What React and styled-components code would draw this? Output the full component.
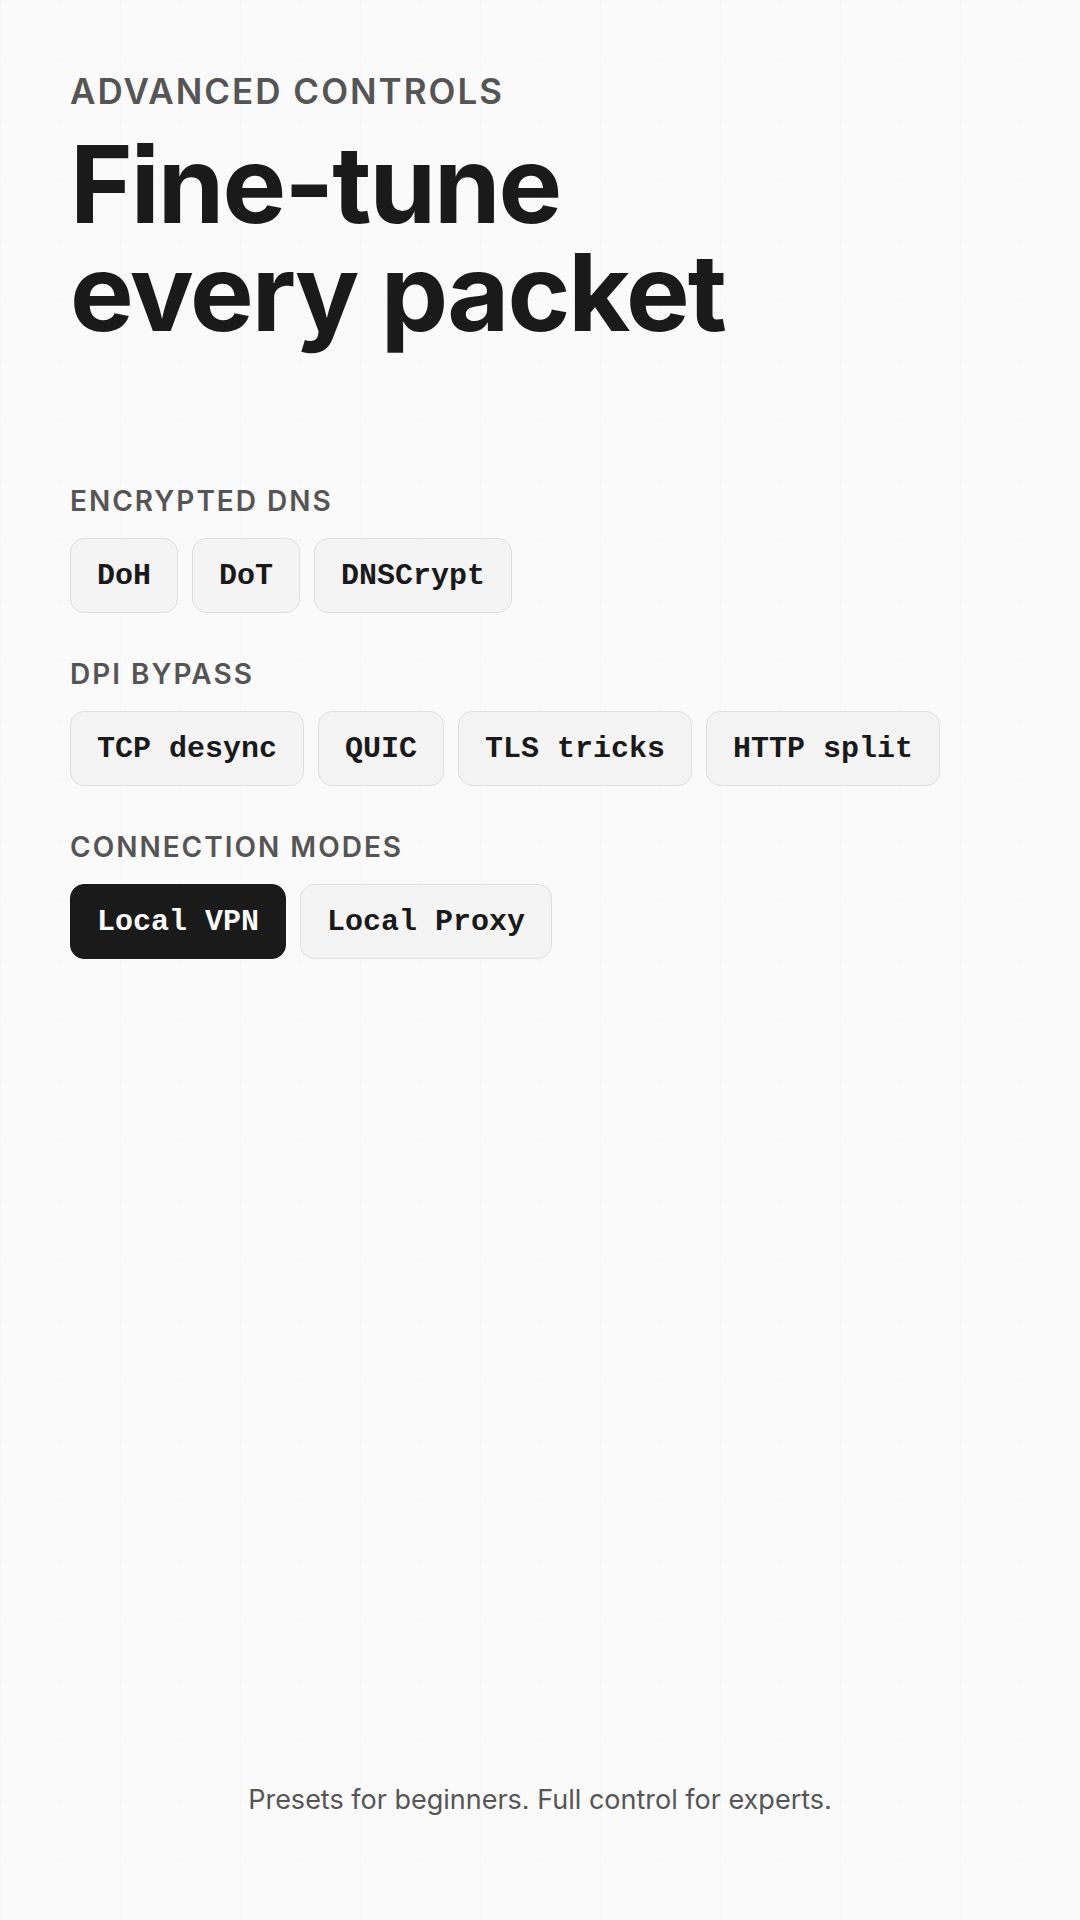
import React from "react";
import styled, { createGlobalStyle } from "styled-components";

const GlobalStyle = createGlobalStyle`
  * {
    box-sizing: border-box;
  }

  body {
    margin: 0;
    background: #fafafa;
    color: #1a1a1a;
    font-family: Inter, "Liberation Sans", sans-serif;
    font-feature-settings: "ss07";
  }
`;

// faint 60px grid behind everything
const Page = styled.main`
  display: flex;
  flex-direction: column;
  min-height: 100vh;
  padding: 70px 70px 96px;
  background-color: #fafafa;
  background-image: linear-gradient(rgba(0, 0, 0, 0.01) 1px, transparent 1px),
    linear-gradient(90deg, rgba(0, 0, 0, 0.01) 1px, transparent 1px);
  background-size: 60px 60px;
`;

const Eyebrow = styled.p`
  margin: 0;
  color: #555;
  font-size: 35px;
  font-weight: 600;
  line-height: 42px;
  letter-spacing: 2px;
  text-transform: uppercase;
`;

const Title = styled.h1`
  margin: 18px 0 0;
  font-size: 107px;
  font-weight: 700;
  line-height: 108px;
  letter-spacing: -2px;
`;

const Groups = styled.div`
  display: flex;
  flex-direction: column;
  gap: 44px;
  margin-top: 138px;
`;

const GroupLabel = styled.h2`
  margin: 0 0 20px;
  color: #555;
  font-size: 28px;
  font-weight: 600;
  line-height: 34px;
  letter-spacing: 2px;
  text-transform: uppercase;
`;

const Chips = styled.div`
  display: flex;
  flex-wrap: wrap;
  gap: 14px;
`;

const Chip = styled.button`
  height: 75px;
  padding: 0 26px;
  border: 1px solid ${(props) => (props.$active ? "#1a1a1a" : "#e0e0e0")};
  border-radius: 14px;
  background: ${(props) => (props.$active ? "#1a1a1a" : "#f4f4f4")};
  color: ${(props) => (props.$active ? "#fafafa" : "#1a1a1a")};
  font-family: "Liberation Mono", monospace;
  font-size: 30px;
  font-weight: 600;
  cursor: pointer;
`;

const Footer = styled.p`
  margin: auto 0 0;
  color: #555;
  font-size: 27px;
  line-height: 48px;
  text-align: center;
`;

const groups = [
  { label: "Encrypted DNS", options: ["DoH", "DoT", "DNSCrypt"] },
  { label: "DPI bypass", options: ["TCP desync", "QUIC", "TLS tricks", "HTTP split"] },
  { label: "Connection modes", options: ["Local VPN", "Local Proxy"], active: "Local VPN" },
];

const App = () => (
  <>
    <GlobalStyle />
    <Page>
      <Eyebrow>Advanced controls</Eyebrow>
      <Title>
        Fine-tune
        <br />
        every packet
      </Title>
      <Groups>
        {groups.map((group) => (
          <section key={group.label}>
            <GroupLabel>{group.label}</GroupLabel>
            <Chips>
              {group.options.map((option) => (
                <Chip key={option} type="button" $active={option === group.active}>
                  {option}
                </Chip>
              ))}
            </Chips>
          </section>
        ))}
      </Groups>
      <Footer>Presets for beginners. Full control for experts.</Footer>
    </Page>
  </>
);

export default App;
